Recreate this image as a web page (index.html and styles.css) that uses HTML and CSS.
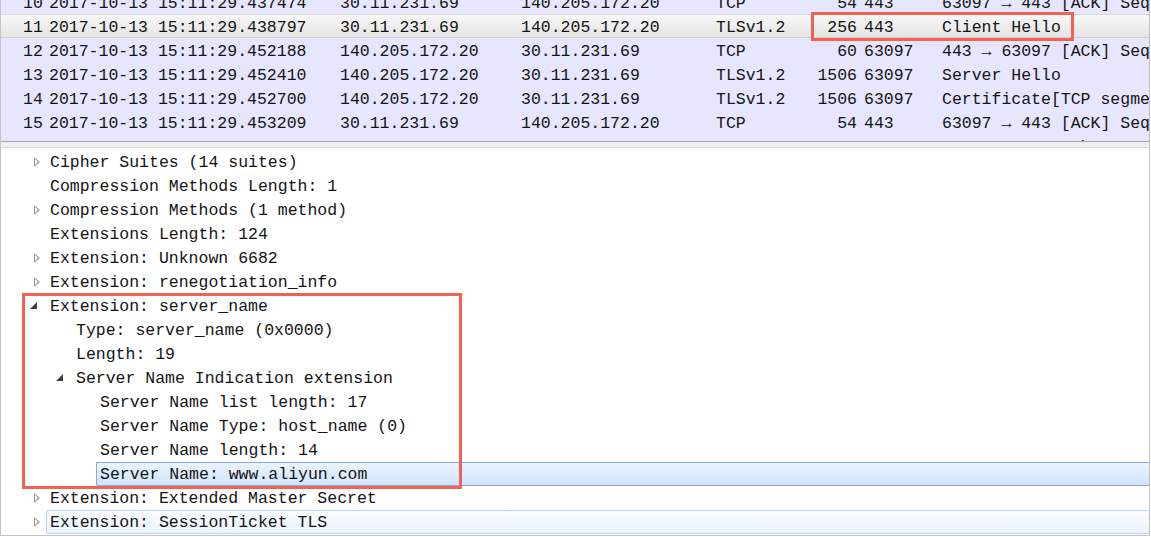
FILE: index.html
```html
<html>
    <head>
        <link rel="stylesheet" href="styles.css">
    </head>
    <body>
        <div class="win">
            <div class="packets">
                <div class="plist">
                    <div class="prow"><span>10</span><span>2017-10-13 15:11:29.437474</span><span>30.11.231.69</span><span>140.205.172.20</span><span>TCP</span><span class="len">54</span><span class="port">443</span><span>63097 &rarr; 443 [ACK] Seq=1 Ack=1 Win=65536 Len=0</span></div>
                    <div class="prow sel"><span>11</span><span>2017-10-13 15:11:29.438797</span><span>30.11.231.69</span><span>140.205.172.20</span><span>TLSv1.2</span><span class="len">256</span><span class="port">443</span><span>Client Hello</span></div>
                    <div class="prow"><span>12</span><span>2017-10-13 15:11:29.452188</span><span>140.205.172.20</span><span>30.11.231.69</span><span>TCP</span><span class="len">60</span><span class="port">63097</span><span>443 &rarr; 63097 [ACK] Seq=1 Ack=203 Win=15744 Len=0</span></div>
                    <div class="prow"><span>13</span><span>2017-10-13 15:11:29.452410</span><span>140.205.172.20</span><span>30.11.231.69</span><span>TLSv1.2</span><span class="len">1506</span><span class="port">63097</span><span>Server Hello</span></div>
                    <div class="prow"><span>14</span><span>2017-10-13 15:11:29.452700</span><span>140.205.172.20</span><span>30.11.231.69</span><span>TLSv1.2</span><span class="len">1506</span><span class="port">63097</span><span>Certificate[TCP segment of a reassembled PDU]</span></div>
                    <div class="prow"><span>15</span><span>2017-10-13 15:11:29.453209</span><span>30.11.231.69</span><span>140.205.172.20</span><span>TCP</span><span class="len">54</span><span class="port">443</span><span>63097 &rarr; 443 [ACK] Seq=203 Ack=2905 Win=65536 Len=0</span></div>
                    <div class="prow"><span>16</span><span>2017-10-13 15:11:29.453404</span><span>140.205.172.20</span><span>30.11.231.69</span><span>TLSv1.2</span><span class="len">78</span><span class="port">63097</span><span>Server Key Exchange</span></div>
                </div>
            </div>
            <div class="splitter"></div>
            <div class="details">
                <div class="drow l1"><span class="tog closed"></span><span class="lbl">Cipher Suites (14 suites)</span></div>
                <div class="drow l1"><span class="tog"></span><span class="lbl">Compression Methods Length: 1</span></div>
                <div class="drow l1"><span class="tog closed"></span><span class="lbl">Compression Methods (1 method)</span></div>
                <div class="drow l1"><span class="tog"></span><span class="lbl">Extensions Length: 124</span></div>
                <div class="drow l1"><span class="tog closed"></span><span class="lbl">Extension: Unknown 6682</span></div>
                <div class="drow l1"><span class="tog closed"></span><span class="lbl">Extension: renegotiation_info</span></div>
                <div class="drow l1"><span class="tog open"></span><span class="lbl">Extension: server_name</span></div>
                <div class="drow l2"><span class="tog"></span><span class="lbl">Type: server_name (0x0000)</span></div>
                <div class="drow l2"><span class="tog"></span><span class="lbl">Length: 19</span></div>
                <div class="drow l2"><span class="tog open"></span><span class="lbl">Server Name Indication extension</span></div>
                <div class="drow l3"><span class="tog"></span><span class="lbl">Server Name list length: 17</span></div>
                <div class="drow l3"><span class="tog"></span><span class="lbl">Server Name Type: host_name (0)</span></div>
                <div class="drow l3"><span class="tog"></span><span class="lbl">Server Name length: 14</span></div>
                <div class="drow l3"><span class="tog"></span><span class="lbl picked">Server Name: www.aliyun.com</span></div>
                <div class="drow l1"><span class="tog closed"></span><span class="lbl">Extension: Extended Master Secret</span></div>
                <div class="drow l1"><span class="tog closed"></span><span class="lbl hover">Extension: SessionTicket TLS</span></div>
            </div>
            <div class="mark mark-hello"></div>
            <div class="mark mark-sni"></div>
        </div>
    </body>
</html>
```
FILE: styles.css
```css
body {margin: 0; background: #fff; font-family: "Liberation Mono", "DejaVu Sans Mono", monospace; font-size: 16.5px; color: #141414;}
.win {position: relative; width: 1150px; height: 536px; box-sizing: border-box; border-left: 1px solid #c4c4c4; border-right: 1px solid #c4c4c4; border-bottom: 1px solid #c4c4c4; overflow: hidden;}

/* packet list */
.packets {height: 141px; overflow: hidden; background: #e7e6ff;}
.plist {margin-top: -10px;}
.prow {display: grid; grid-template-columns: 26px 291px 181px 195px 100px 41px 85px 1fr; padding-left: 22px; padding-top: 4px; height: 24px; line-height: 20px; white-space: nowrap; box-sizing: border-box;}
.prow span {overflow: hidden;}
.prow .len {text-align: right;}
.prow .port {padding-left: 7px;}
.prow.sel {background: linear-gradient(#f8f8f8, #e4e4e4); border-top: 1px solid #d6d6d6; border-bottom: 1px solid #cfcfcf; padding-top: 3px; line-height: 19px;}

.splitter {height: 5px; background: #f0f0f0; border-top: 1px solid #a8a8a8; border-bottom: 1px solid #d8d8d8;}

/* packet details */
.details {padding-top: 2px;}
.drow {display: flex; height: 24px; white-space: nowrap;}
.drow.l1 {padding-left: 45px;}
.drow.l2 {padding-left: 71px;}
.drow.l3 {padding-left: 95px;}
.tog {width: 16px; margin-left: -16px; position: relative;}
.tog.closed::before {content: ""; position: absolute; left: 4px; top: 7px; width: 0; height: 0; border-left: 6px solid #9a9a9a; border-top: 5px solid transparent; border-bottom: 5px solid transparent;}
.tog.closed::after {content: ""; position: absolute; left: 5px; top: 9px; width: 0; height: 0; border-left: 3px solid #fff; border-top: 3px solid transparent; border-bottom: 3px solid transparent;}
.tog.open::before {content: ""; position: absolute; left: 0px; top: 8px; width: 0; height: 0; border-bottom: 7px solid #404040; border-left: 7px solid transparent;}
.lbl {flex: 1; padding-left: 3px; padding-top: 2px; border: 1px solid transparent; border-right: none; line-height: 20px; border-radius: 2px 0 0 2px;}
.lbl.picked {background: linear-gradient(#ebf4fe, #cfe4fc); border-color: #84acdd;}
.lbl.hover {background: linear-gradient(#fafcff, #ebf3fd); border-color: #b8d6fb;}

/* red call-out boxes */
.mark {position: absolute; border: 3px solid #f26152; box-sizing: border-box;}
.mark-hello {left: 810px; top: 12px; width: 263px; height: 29px;}
.mark-sni {left: 21px; top: 293px; width: 440px; height: 196px;}
```
